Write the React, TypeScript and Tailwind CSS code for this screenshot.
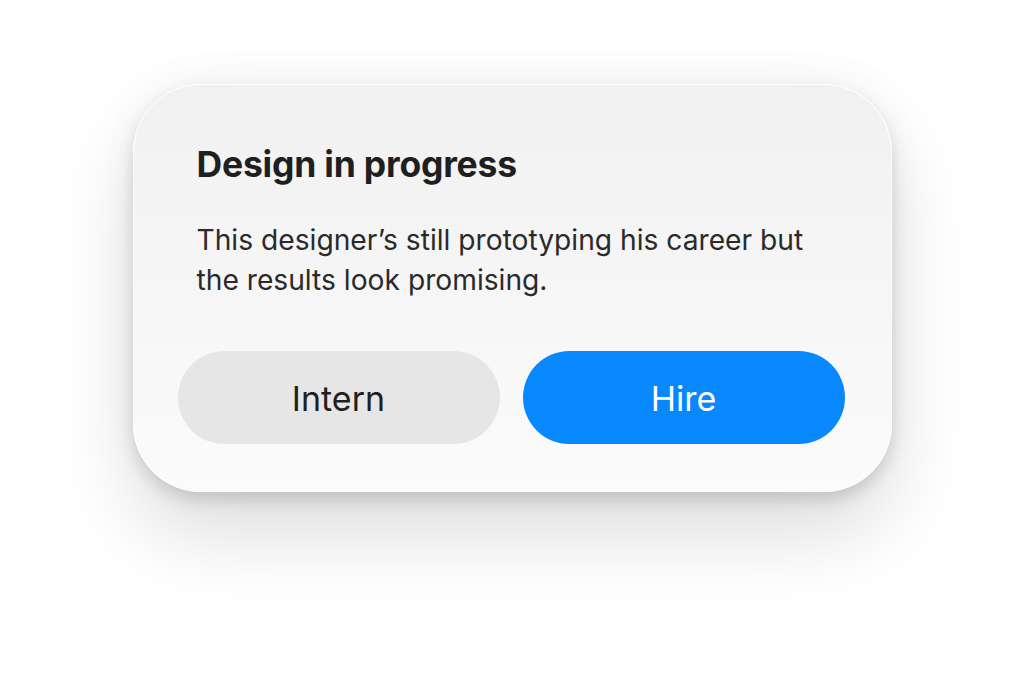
export default function App() {
  return (
    <div className="min-h-[674px] w-full bg-white flex justify-center pt-[84px]" style={{ fontFamily: 'Inter, "Liberation Sans", sans-serif' }}>
      <div className="w-[759px] h-[408px] rounded-[68px] border border-white bg-gradient-to-b from-[#f1f1f1] to-[#fbfbfb] shadow-[0_8px_16px_rgba(0,0,0,0.13),0_40px_80px_rgba(0,0,0,0.14),0_-10px_40px_rgba(0,0,0,0.03)] flex flex-col">
        <div className="px-[63px] pt-[60px]">
          <h1 className="text-[35.5px] leading-[40px] font-bold tracking-[-0.2px] text-[#1f1f1f]">Design in progress</h1>
          <p className="mt-[35px] text-[28.2px] leading-[40px] text-[#2a2a2a] w-[640px]">
            This designer’s still prototyping his career but the results look promising.
          </p>
        </div>
        <div className="mt-[51px] pl-[44px] pr-[46px] grid grid-cols-2 gap-[23px]">
          <button className="h-[93px] rounded-full bg-[#e6e6e6] text-[34px] text-[#1f1f1f] pt-[2px]">Intern</button>
          <button className="h-[93px] rounded-full bg-[#0788fe] text-[34px] text-white pt-[2px]">Hire</button>
        </div>
      </div>
    </div>
  );
}
